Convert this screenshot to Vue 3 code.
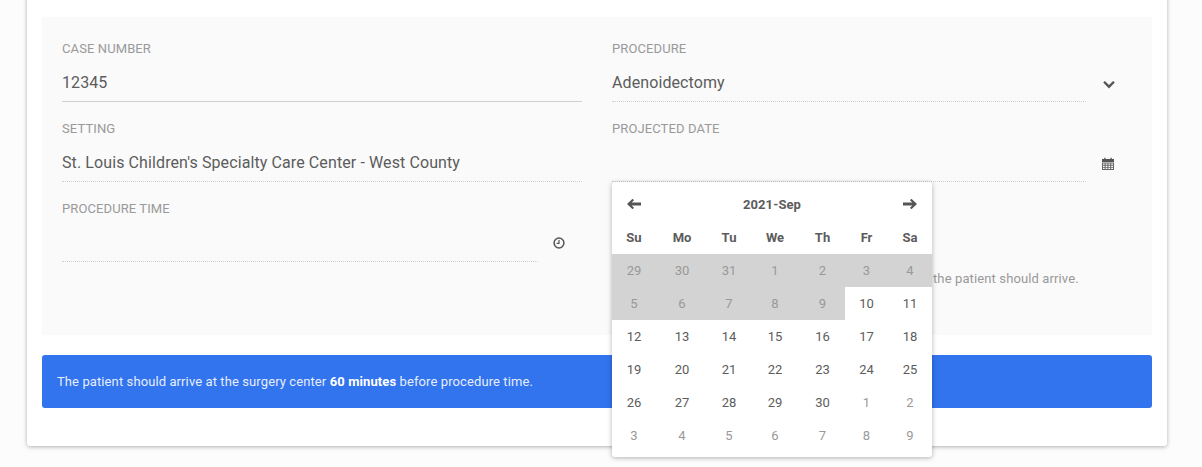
<template>
  <div class="page">
    <div class="card">
      <div class="panel">
        <div class="field">
          <label class="field-label">Case Number</label>
          <div class="input-row solid">
            <span class="value">12345</span>
          </div>
        </div>

        <div class="field">
          <label class="field-label">Procedure</label>
          <div class="input-with-icon">
            <div class="input-row">
              <span class="value">Adenoidectomy</span>
            </div>
            <span class="icon-slot">
              <svg class="icon chevron" viewBox="0 0 14 14" width="14" height="14">
                <path d="M1.2 4.6 2.9 2.9 7 7l4.1-4.1 1.7 1.7L7 10.4z" fill="#555" />
              </svg>
            </span>
          </div>
        </div>

        <div class="field">
          <label class="field-label">Setting</label>
          <div class="input-row">
            <span class="value">St. Louis Children's Specialty Care Center - West County</span>
          </div>
        </div>

        <div class="field">
          <label class="field-label">Projected Date</label>
          <div class="input-with-icon">
            <div class="input-row"></div>
            <span class="icon-slot">
              <svg class="icon" viewBox="0 0 12 13" width="12" height="13">
                <path d="M0 2h2.2V.8h1.3V2h5V.8h1.3V2H12v3H0z" fill="#555" />
                <path d="M0 5.6h12V13H0zM1 6.6v1.2h1.6V6.6zm2.6 0v1.2h1.8V6.6zm2.8 0v1.2h1.8V6.6zm2.8 0v1.2H11V6.6zM1 8.7v1.2h1.6V8.7zm2.6 0v1.2h1.8V8.7zm2.8 0v1.2h1.8V8.7zm2.8 0v1.2H11V8.7zM1 10.8V12h1.6v-1.2zm2.6 0V12h1.8v-1.2zm2.8 0V12h1.8v-1.2zm2.8 0V12H11v-1.2z" fill="#666" fill-rule="evenodd" />
              </svg>
            </span>
          </div>

          <div class="datepicker">
            <div class="dp-head">
              <svg class="dp-arrow" viewBox="0 0 14 12" width="14" height="12">
                <path d="M0 6 5.6.8 7 2.2 4.6 4.6H14v2.8H4.6L7 9.8l-1.4 1.4z" fill="#555" />
              </svg>
              <span class="dp-title">2021-Sep</span>
              <svg class="dp-arrow" viewBox="0 0 14 12" width="14" height="12">
                <path d="M14 6 8.4.8 7 2.2l2.4 2.4H0v2.8h9.4L7 9.8l1.4 1.4z" fill="#555" />
              </svg>
            </div>
            <div class="dp-grid">
              <span v-for="d in weekdays" :key="d" class="dow">{{ d }}</span>
              <span
                v-for="(day, idx) in days"
                :key="idx"
                class="day"
                :class="{ muted: day.muted, disabled: day.disabled }"
              >{{ day.n }}</span>
            </div>
          </div>
        </div>

        <div class="field">
          <label class="field-label">Procedure Time</label>
          <div class="input-with-icon">
            <div class="input-row"></div>
            <span class="icon-slot narrow">
              <svg class="icon" viewBox="0 0 12 12" width="12" height="12">
                <circle cx="6" cy="6" r="4.9" fill="none" stroke="#555" stroke-width="1.5" />
                <path d="M6 3v3.4H3.6" fill="none" stroke="#555" stroke-width="1.2" />
              </svg>
            </span>
          </div>
        </div>

        <div class="field">
          <p class="help-text">the patient should arrive.</p>
        </div>
      </div>

      <div class="alert">The patient should arrive at the surgery center <strong>60 minutes</strong> before procedure time.</div>
    </div>
  </div>
</template>

<script setup>
const weekdays = ['Su', 'Mo', 'Tu', 'We', 'Th', 'Fr', 'Sa']

const buildDays = () => {
  const list = []
  const prev = [29, 30, 31]
  prev.forEach((n) => list.push({ n, muted: true, disabled: true }))
  for (let n = 1; n <= 30; n++) {
    list.push({ n, muted: n < 10, disabled: n < 10 })
  }
  for (let n = 1; n <= 9; n++) {
    list.push({ n, muted: true, disabled: false })
  }
  return list
}

const days = buildDays()
</script>

<style scoped>
.page {
  height: 467px;
  overflow: hidden;
  background: #fcfcfc;
  font-family: Roboto, "Liberation Sans", sans-serif;
  padding: 0 35px 0 27px;
  box-sizing: border-box;
}

.card {
  margin-top: -20px;
  padding: 37px 15px 38px;
  background: #fff;
  border-radius: 3px;
  box-shadow: 0 1px 4px rgba(0, 0, 0, 0.3);
}

.panel {
  display: grid;
  grid-template-columns: 520px 520px;
  column-gap: 30px;
  row-gap: 16px;
  padding: 21px 20px 48px;
  background: #fafafa;
}

.field {
  position: relative;
  min-width: 0;
}

.field-label {
  display: block;
  height: 20px;
  line-height: 22px;
  font-size: 13px;
  letter-spacing: 0.1px;
  color: #999;
  text-transform: uppercase;
}

.input-with-icon {
  display: flex;
}

.input-with-icon .input-row {
  flex: 1;
}

.input-row {
  height: 44px;
  box-sizing: border-box;
  display: flex;
  align-items: center;
  padding-top: 6px;
  border-bottom: 1px dotted #cfcfcf;
}

.input-row.solid {
  border-bottom: 1px solid #d0d0d0;
}

.value {
  font-size: 16px;
  letter-spacing: 0.1px;
  color: #5c5c5c;
}

.icon-slot {
  width: 46px;
  height: 44px;
  box-sizing: border-box;
  padding: 6px 2px 0 0;
  display: flex;
  align-items: center;
  justify-content: center;
}

.icon-slot.narrow {
  width: 44px;
}

.chevron {
  position: relative;
  top: 2px;
  left: 1px;
}

.help-text {
  margin: 73px 0 0 321px;
  font-size: 13px;
  letter-spacing: 0.12px;
  line-height: 16px;
  color: #999;
  white-space: nowrap;
}

.datepicker {
  position: absolute;
  top: 64px;
  left: 0;
  z-index: 5;
  width: 320px;
  height: 275px;
  background: #fff;
  border-radius: 3px;
  box-shadow: 0 1px 5px rgba(0, 0, 0, 0.3);
}

.dp-head {
  display: flex;
  align-items: center;
  justify-content: space-between;
  height: 44px;
  padding: 0 15px;
}

.dp-title {
  font-size: 13px;
  font-weight: 700;
  letter-spacing: 0.1px;
  color: #5c5c5c;
}

.dp-grid {
  display: grid;
  grid-template-columns: 44px 52px 42px 50px 45px 43px 44px;
  grid-auto-rows: 33px;
  grid-template-rows: 28px;
}

.dow,
.day {
  display: flex;
  align-items: center;
  justify-content: center;
  font-size: 13px;
  color: #5c5c5c;
}

.dow {
  font-weight: 700;
  padding-bottom: 6px;
}

.day {
  background: #fff;
}

.day.muted {
  color: #999;
}

.day.disabled {
  background: #d3d3d3;
}

.alert {
  margin-top: 20px;
  height: 53px;
  line-height: 53px;
  padding: 0 15px;
  background: #3273ee;
  border-radius: 3px;
  font-size: 13px;
  letter-spacing: 0.1px;
  color: #e6eefd;
}

.alert strong {
  color: #fff;
  font-weight: 700;
}
</style>
